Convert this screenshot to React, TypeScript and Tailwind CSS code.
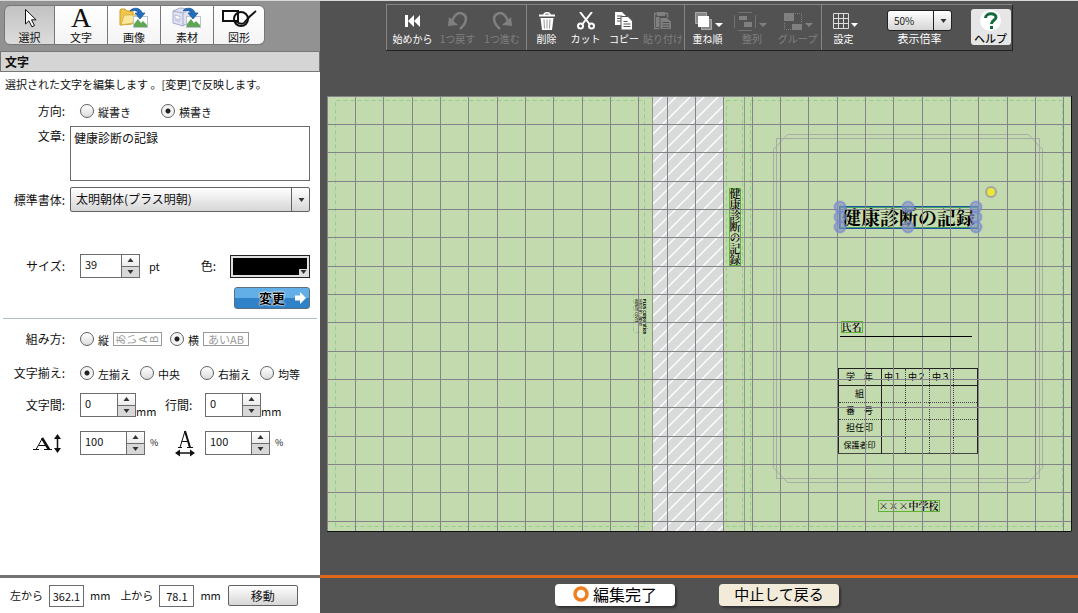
import React, { useId, useState } from "react";

const mincho = "font-['Noto_Serif_CJK_JP','Noto_Sans_CJK_JP',serif]";

/* ---------- shared controls ---------- */

function Caret({ up = false }: { up?: boolean }) {
  return (
    <svg width="7" height="4" viewBox="0 0 7 4" aria-hidden="true">
      <path d={up ? "M3.5 0 L6.5 4 H0.5 Z" : "M0.5 0 H6.5 L3.5 4 Z"} fill="#333" />
    </svg>
  );
}

function FieldLabel({ htmlFor, children }: { htmlFor?: string; children: React.ReactNode }) {
  return (
    <label htmlFor={htmlFor} className="shrink-0 text-right whitespace-nowrap">
      {children}
    </label>
  );
}

function Radio({ name, label, checked, onSelect, extra }: {
  name: string; label: string; checked: boolean; onSelect: () => void; extra?: React.ReactNode;
}) {
  return (
    <label className="flex items-center gap-1 text-[11px] whitespace-nowrap">
      <input
        type="radio"
        name={name}
        checked={checked}
        onChange={onSelect}
        className="size-[14px] shrink-0 appearance-none rounded-full border border-[#5f6163] bg-linear-to-b from-white to-[#dcdcdc] checked:bg-[radial-gradient(circle,#222_2px,#f4f4f4_3px)]"
      />
      <span className="pt-[2px]">{label}</span>
      {extra}
    </label>
  );
}

const spinnerWidths = { sm: "w-14", md: "w-[60px]", lg: "w-[65px]" };

function Spinner({ id, label, initial, size = "sm" }: { id: string; label?: string; initial: number; size?: "sm" | "md" | "lg" }) {
  const [value, setValue] = useState(initial);
  return (
    <div className={`flex h-6 shrink-0 ${spinnerWidths[size]}`}>
      <input
        id={id}
        aria-label={label}
        value={value}
        onChange={(e) => setValue(Number(e.target.value) || 0)}
        className="min-w-0 flex-1 border border-[#6a6c6e] bg-white pb-1 pl-1 text-[11px] leading-4"
      />
      <div className="flex w-[18px] flex-col border-y border-r border-[#6a6c6e]">
        <button type="button" aria-label="増やす" onClick={() => setValue(value + 1)} className="flex flex-1 items-center justify-center border-b border-[#6a6c6e] bg-linear-to-b from-white to-[#ececec]">
          <Caret up />
        </button>
        <button type="button" aria-label="減らす" onClick={() => setValue(value - 1)} className="flex flex-1 items-center justify-center bg-[#d8d8d8]">
          <Caret />
        </button>
      </div>
    </div>
  );
}

/* ---------- left panel ---------- */

function Picture() {
  return (
    <>
      <rect x="14.5" y="9.5" width="14" height="11" fill="#fff" stroke="#b9c4cc" />
      <path d="M15 20 v-3 l4 -5 3 4 2 -2 4 4 v2 Z" fill="#5fa653" />
      <path d="M11 4 C13 0 22 0 23 6 h3 l-5 6 -5 -6 h3 C18 3 14 3 11 4 Z" fill="#1f6fc0" stroke="#174f93" strokeWidth=".7" />
    </>
  );
}

const tools = [
  {
    label: "選択",
    icon: (
      <svg width="28" height="23" viewBox="0 0 28 23">
        <path d="M9.5 2.5 V17 l3.4 -3.2 3 6 2.6 -1.2 -3 -5.8 h4.6 Z" fill="#fff" stroke="#111" />
      </svg>
    ),
  },
  {
    label: "文字",
    icon: <span className="font-['Liberation_Serif',serif] text-[28px] leading-6">A</span>,
  },
  {
    label: "画像",
    icon: (
      <svg width="30" height="23" viewBox="0 0 30 23">
        <path d="M1 18 V3 l1 -1 h4 l2 2 h6 v4 h2 l-3 9 Z" fill="#f0c64f" stroke="#d09a26" />
        <path d="M2 18 L5 8 h12 l-3 8 Z" fill="#fbe79a" stroke="#d8ab3c" strokeWidth=".8" />
        <Picture />
      </svg>
    ),
  },
  {
    label: "素材",
    icon: (
      <svg width="30" height="23" viewBox="0 0 30 23">
        <path d="M1 4 L8 1 l10 1 v13 l-7 4 -10 -3 Z" fill="#dfe2f4" stroke="#a7abc9" />
        <path d="M1 4 l10 2 7 -4 M11 6 v13" fill="none" stroke="#a7abc9" />
        <path d="M3 8 l5 1.500 v3 l-5 -1 Z M3 13 l5 1.500" fill="#fff" stroke="#a7abc9" strokeWidth=".7" />
        <Picture />
      </svg>
    ),
  },
  {
    label: "図形",
    icon: (
      <svg width="36" height="23" viewBox="0 0 36 23" fill="none" stroke="#111" strokeWidth="2">
        <path d="M2 4 H17 V14 H2 Z" />
        <circle cx="20" cy="12" r="7" />
        <path d="M35 4 C31 7 27 11 23 16 C20 18 17 16 14 14" />
      </svg>
    ),
  },
];

function ToolTabs() {
  const [active, setActive] = useState("選択");
  return (
    <div className="flex h-[51px] border-t border-[#d5d9d8] bg-[#929292] px-1 pt-1">
      {tools.map((t) => (
        <button
          key={t.label}
          type="button"
          onClick={() => setActive(t.label)}
          className={`flex h-10 w-[53px] flex-col items-center justify-between border border-l-0 border-[#777] pb-px first:w-[51px] first:rounded-l-md first:border-l last:w-[51px] last:rounded-r-md ${
            active === t.label ? "bg-linear-to-b from-[#c2c2c2] to-[#dcdcdc]" : "bg-linear-to-b from-white to-[#f4f4f4]"
          }`}
        >
          <span className="flex h-6 items-center justify-center">{t.icon}</span>
          <span className="text-[11px] leading-3">{t.label}</span>
        </button>
      ))}
    </div>
  );
}

function ScaleIcon({ horizontal = false }: { horizontal?: boolean }) {
  return horizontal ? (
    <svg width="20" height="28" viewBox="0 0 20 28" fill="none" stroke="#111">
      <path d="M5 18.500 L10 2 L15 18.500 M6.500 12.500 H13 M3 18.500 h4 M12 18.500 h6" />
      <path d="M10 2 L15 18.500" strokeWidth="2" />
      <path d="M2 24 H18" strokeWidth="1.500" />
      <path d="M0 24 l5 -3.500 v7 Z M20 24 l-5 -3.500 v7 Z" fill="#111" stroke="none" />
    </svg>
  ) : (
    <svg width="28" height="19" viewBox="0 0 28 19" fill="none" stroke="#111">
      <path d="M3 15.500 L9.500 4 M5.500 11.500 h8 M0 15.500 h6 M11 15.500 h8" />
      <path d="M9 4 L16 15.500" strokeWidth="2.500" />
      <path d="M24.500 3 v13" strokeWidth="1.500" />
      <path d="M24.500 0 l3.500 5 h-7 Z M24.500 19 l3.500 -5 h-7 Z" fill="#111" stroke="none" />
    </svg>
  );
}

function TextForm() {
  const id = useId();
  const [direction, setDirection] = useState("横書き");
  const [flow, setFlow] = useState("横");
  const [align, setAlign] = useState("左揃え");
  const sample = "flex h-[14px] shrink-0 items-center justify-center border border-[#999] text-[11px] leading-3 text-[#999]";
  return (
    <form className="flex-1 text-xs" onSubmit={(e) => e.preventDefault()}>
      <p className="px-[5px] pt-[3px] pb-px text-[11px] leading-[18px]">選択された文字を編集します 。[変更]で反映します。</p>

      <div className="grid grid-cols-[65px_1fr] items-center gap-x-[5px] gap-y-[6px] pt-2 pr-[10px]">
        <FieldLabel>方向:</FieldLabel>
        <div className="grid h-[18px] grid-cols-[81px_1fr] pl-[10px]">
          {["縦書き", "横書き"].map((d) => (
            <Radio key={d} name="direction" label={d} checked={direction === d} onSelect={() => setDirection(d)} />
          ))}
        </div>
        <div className="self-start pt-[2px] text-right">
          <FieldLabel htmlFor={`${id}-text`}>文章:</FieldLabel>
        </div>
        <textarea
          id={`${id}-text`}
          defaultValue="健康診断の記録"
          className="block h-[55px] w-full resize-none border border-[#6a6c6e] bg-white px-[3px] py-[2px] text-xs leading-[18px]"
        />
        <FieldLabel htmlFor={`${id}-font`}>標準書体:</FieldLabel>
        <div className="relative">
          <select
            id={`${id}-font`}
            className="block h-[25px] w-full appearance-none rounded-[2px] border border-[#5f6163] bg-linear-to-b from-white to-[#d6d6d6] pb-[2px] pl-[5px] text-xs"
          >
            <option>太明朝体(プラス明朝)</option>
          </select>
          <span className="pointer-events-none absolute inset-y-0 right-0 flex w-[19px] items-center justify-center border-l border-[#5f6163]">
            <Caret />
          </span>
        </div>
      </div>

      <div className="mt-[42px] grid grid-cols-[65px_1fr] items-center gap-x-[15px]">
        <FieldLabel htmlFor={`${id}-size`}>サイズ:</FieldLabel>
        <div className="flex items-center pr-[10px]">
          <Spinner id={`${id}-size`} initial={39} size="md" />
          <span className="ml-[9px] text-[11px]">pt</span>
          <label htmlFor={`${id}-color`} className="ml-auto">色:</label>
          <button
            id={`${id}-color`}
            type="button"
            aria-label="色"
            className="ml-[14px] flex h-[23px] w-20 items-end justify-end border border-[#222] bg-black p-0 ring-2 ring-[#e0e0e0] ring-inset"
          >
            <span className="m-px flex h-[7px] w-[9px] items-center justify-center bg-[#ddd]">
              <Caret />
            </span>
          </button>
        </div>
      </div>

      <div className="flex justify-end pt-[9px] pr-[10px]">
        <button
          type="submit"
          className="flex h-[22px] w-[76px] items-center justify-end gap-[10px] rounded-[3px] border border-[#5c6f80] bg-linear-to-b from-[#62aee6] from-50% to-[#2f82c8] to-50% pr-[3px] text-[13px] font-bold text-black"
        >
          <span className="[text-shadow:0_0_2px_#fff,0_0_2px_#fff,0_0_1px_#fff]">変更</span>
          <svg width="11" height="12" viewBox="0 0 11 12" aria-hidden="true">
            <path d="M0 3.500 H5 V0 L11 6 L5 12 V8.500 H0 Z" fill="#fff" />
          </svg>
        </button>
      </div>

      <hr className="mx-[3px] mt-[9px] border-[#b5bfc0]" />

      <div className="grid grid-cols-[65px_1fr] items-center gap-x-[15px] pt-[10px]">
        <FieldLabel>組み方:</FieldLabel>
        <div className="flex h-5 items-center gap-2">
          <Radio name="flow" label="縦" checked={flow === "縦"} onSelect={() => setFlow("縦")} extra={
            <span className={`${sample} w-[49px]`} aria-hidden="true">
              <span className="h-[45px] w-3 shrink-0 -rotate-90 whitespace-nowrap [text-orientation:upright] [writing-mode:vertical-rl]">あいAB</span>
            </span>
          } />
          <Radio name="flow" label="横" checked={flow === "横"} onSelect={() => setFlow("横")} extra={
            <span className={`${sample} w-[46px]`} aria-hidden="true">あいAB</span>
          } />
        </div>
      </div>

      <div className="grid grid-cols-[65px_1fr] items-center gap-x-[15px] pt-[14px]">
        <FieldLabel>文字揃え:</FieldLabel>
        <div className="grid h-5 grid-cols-[60px_60px_60px_1fr]">
          {["左揃え", "中央", "右揃え", "均等"].map((a) => (
            <Radio key={a} name="align" label={a} checked={align === a} onSelect={() => setAlign(a)} />
          ))}
        </div>
      </div>

      <div className="grid grid-cols-[65px_56px_54px_1fr] items-center gap-y-3 pt-[10px]">
        <FieldLabel htmlFor={`${id}-ls`}>文字間:</FieldLabel>
        <div className="col-span-2 flex items-center pl-[15px]">
          <Spinner id={`${id}-ls`} initial={0} />
          <span className="pt-3 text-[11px] leading-3">mm</span>
        </div>
        <div className="-ml-[10px] flex items-center">
          <label htmlFor={`${id}-lh`} className="w-10 shrink-0 whitespace-nowrap">行間:</label>
          <Spinner id={`${id}-lh`} initial={0} />
          <span className="pt-3 text-[11px] leading-3">mm</span>
        </div>
        <div className="flex justify-end pr-1"><ScaleIcon /></div>
        <div className="col-span-2 flex items-center pl-[15px]">
          <Spinner id={`${id}-sy`} label="縦倍率" initial={100} size="lg" />
          <span className="ml-[5px] text-[9px]">%</span>
        </div>
        <div className="flex items-center">
          <ScaleIcon horizontal />
          <span className="ml-[10px] flex items-center">
            <Spinner id={`${id}-sx`} label="横倍率" initial={100} size="lg" />
            <span className="ml-[5px] text-[9px]">%</span>
          </span>
        </div>
      </div>
    </form>
  );
}

function PositionBar() {
  const box = "h-[22px] border border-[#6a6c6e] bg-white text-center text-[11px]";
  return (
    <form className="flex h-[38px] items-center border-t-3 border-[#737373] pl-[10px] text-[11px]" onSubmit={(e) => e.preventDefault()}>
      <label htmlFor="pos-left">左から</label>
      <input id="pos-left" defaultValue="362.1" className={`${box} ml-[6px] w-[35px]`} />
      <span className="ml-[6px]">mm</span>
      <label htmlFor="pos-top" className="ml-[10px]">上から</label>
      <input id="pos-top" defaultValue="78.1" className={`${box} ml-[6px] w-[35px]`} />
      <span className="ml-[6px]">mm</span>
      <button type="submit" className="ml-[7px] h-[21px] w-[70px] rounded-[2px] border border-[#5f6163] bg-linear-to-b from-white to-[#d6d6d6] text-xs leading-4">
        移動
      </button>
    </form>
  );
}

/* ---------- top toolbar ---------- */

const MenuMark = <path d="M25 11 h8 l-4 4 Z" fill="currentColor" />;

const icons: Record<string, React.ReactNode> = {
  始めから: <svg width="16" height="14" viewBox="0 0 16 14" fill="currentColor"><path d="M0 1 h3 v12 h-3 Z M3 7 L9 1 v12 Z M9 7 L15 1 v12 Z" /></svg>,
  "1つ戻す": <svg width="20" height="18" viewBox="0 0 20 18"><path d="M4 9 C6 3 10 0 14 1.500 C20 4 19 11 12 17" fill="none" stroke="currentColor" strokeWidth="2.500" /><path d="M1 5 L0 14 L10 13 Z" fill="currentColor" /></svg>,
  "1つ進む": <svg width="20" height="18" viewBox="0 0 20 18"><path d="M16 9 C14 3 10 0 6 1.500 C0 4 1 11 8 17" fill="none" stroke="currentColor" strokeWidth="2.500" /><path d="M19 5 L20 14 L10 13 Z" fill="currentColor" /></svg>,
  削除: <svg width="16" height="18" viewBox="0 0 16 18" fill="none" stroke="currentColor"><path d="M0 3.500 h16" strokeWidth="2" /><path d="M5 3 C5 0 11 0 11 3" strokeWidth="1.500" /><path d="M1.500 6 h13 l-1.500 12 h-10 Z" fill="currentColor" stroke="none" /><path d="M5 7.500 l.5 9 M8 7.500 v9 M11 7.500 l-.5 9" stroke="#999" /></svg>,
  カット: <svg width="18" height="18" viewBox="0 0 18 18" fill="none" stroke="currentColor" strokeWidth="2"><path d="M3 0 L12.500 12 M15 0 L5.500 12" /><circle cx="3.500" cy="14" r="2.500" /><circle cx="14.500" cy="14" r="2.500" /></svg>,
  コピー: <svg width="18" height="18" viewBox="0 0 18 18"><path d="M0 0 h7 l4 4 v9 h-11 Z" fill="currentColor" /><path d="M2 4 h5 M2 6.500 h7 M2 9 h7" stroke="#555" /><path d="M6 4.500 h7 l4.500 4.500 v9 h-11.500 Z" fill="currentColor" stroke="#555" /><path d="M8.500 9.500 h4 M8.500 12 h7 M8.500 14.500 h7" stroke="#555" /></svg>,
  貼り付け: <svg width="18" height="18" viewBox="0 0 18 18"><path d="M0.500 1.500 h13 v15 h-13 Z" fill="none" stroke="currentColor" strokeWidth="1.500" /><path d="M3 0 h8 v4 h-8 Z M2 5 h8 v10 h-8 Z" fill="currentColor" /><path d="M6 5.500 h7 l4.500 4 v8 h-11.500 Z" fill="currentColor" stroke="#505050" /><path d="M8.500 10.500 h7 M8.500 13 h7 M8.500 15.500 h7" stroke="#505050" /></svg>,
  重ね順: <svg width="36" height="19" viewBox="0 0 36 19"><path d="M5.500 0.500 h11 v11 h-11 Z M11.500 7.500 h10 v10 h-10 Z" fill="#888" stroke="#aaa" /><path d="M8 4 h11 v11 h-11 Z" fill="#fff" />{MenuMark}</svg>,
  整列: <svg width="36" height="19" viewBox="0 0 36 19"><path d="M4 0.500 h14 M4 18.500 h14 M0.500 3 v13 M21.500 3 v13" stroke="currentColor" strokeOpacity=".7" /><path d="M5 4 h8 v4 h-8 Z M10 10 h8 v5 h-8 Z" fill="currentColor" />{MenuMark}</svg>,
  グループ: <svg width="36" height="19" viewBox="0 0 36 19"><path d="M4 1 h10 v8 h-10 Z M12 12 h10 v6 h-10 Z" fill="currentColor" /><path d="M15 1.500 h6.500 v9 M4.500 11 v6.500 h7" fill="none" stroke="currentColor" strokeDasharray="1 1" />{MenuMark}</svg>,
  設定: <svg width="36" height="19" viewBox="0 0 36 19"><path d="M7.500 1.500 h15 v15 h-15 Z M12.500 1 v16 M17.500 1 v16 M7 6.500 h16 M7 11.500 h16" fill="none" stroke="#ddd" /><path d="M25 11 h7 l-3.500 4 Z" fill="#fff" /></svg>,
};

function Command({ name, width, disabled = false }: { name: string; width: string; disabled?: boolean }) {
  return (
    <button type="button" disabled={disabled} className={`flex flex-col items-center justify-between pt-[6px] pb-1 ${width} ${disabled ? "text-[#808080]" : "text-white"}`}>
      <span className="flex h-5 items-center">{icons[name]}</span>
      <span className="text-[10px] leading-[14px] whitespace-nowrap">{name}</span>
    </button>
  );
}

function CommandBar() {
  const group = "flex border-l border-[#858585]";
  return (
    <header className="flex justify-center border-t border-[#d5d9d8] pt-[3px]">
      <div role="toolbar" className="flex h-[47px] border-t border-r border-b border-t-[#858585] border-r-[#222] border-b-[#222]">
        <div className={`${group} pr-px pl-[3px]`}>
          <Command name="始めから" width="w-[46px]" />
          <Command name="1つ戻す" width="w-[44px]" disabled />
          <Command name="1つ進む" width="w-[45px]" disabled />
        </div>
        <div className={`${group} pl-px`}>
          <Command name="削除" width="w-[38px]" />
          <Command name="カット" width="w-[40px]" />
          <Command name="コピー" width="w-[37px]" />
          <Command name="貼り付け" width="w-[41px]" disabled />
        </div>
        <div className={`${group} pl-px`}>
          <Command name="重ね順" width="w-[44px]" />
          <Command name="整列" width="w-[45px]" disabled />
          <Command name="グループ" width="w-[46px]" disabled />
        </div>
        <div className={`${group} pl-px`}>
          <Command name="設定" width="w-[42px]" />
          <div className="flex w-[106px] flex-col items-center pt-[5px] pl-1">
            <span className="relative flex">
              <select id="zoom" className="h-[21px] w-[65px] appearance-none rounded-[3px] border border-[#222] bg-linear-to-b from-white to-[#d6d6d6] pl-[6px] text-[10px] text-[#222]">
                <option>50%</option>
              </select>
              <span className="pointer-events-none absolute inset-y-0 right-0 flex w-[19px] items-center justify-center border-l border-[#222]">
                <Caret />
              </span>
            </span>
            <label htmlFor="zoom" className="text-[11px] leading-[14px] text-white">表示倍率</label>
          </div>
          <button type="button" className="mt-1 mr-px flex h-9 w-10 flex-col items-center justify-between rounded-[3px] bg-[#e6e6e6] pt-px pb-px">
            <span className="flex size-[21px] items-center justify-center rounded-full bg-white">
              <svg width="14" height="18" viewBox="0 0 14 18" fill="none" stroke="#126b3a" strokeWidth="3">
                <path d="M1.500 6 C1.500 0.500 12.500 0.500 12 5.500 C12 8 7.500 8 7.500 12 M7.500 14 v3" />
              </svg>
            </span>
            <span className="text-[11px] leading-3 font-medium">ヘルプ</span>
          </button>
        </div>
      </div>
    </header>
  );
}

/* ---------- cover artwork ---------- */

const STEP = 28.346;
const columns = Array.from({ length: 27 }, (_, i) => Math.floor(i * STEP) + 0.5);
const rows = Array.from({ length: 16 }, (_, i) => Math.floor(i * STEP) + 0.5);

function Guides() {
  return (
    <svg className="absolute inset-0" width="745" height="436" viewBox="0 0 745 436" fill="none" aria-hidden="true">
      <defs>
        <pattern id="hatch" width="14" height="14" patternUnits="userSpaceOnUse">
          <path d="M-2 16 L16 -2 M-2 2 L2 -2 M12 16 L16 12" stroke="#fff" strokeWidth="1.300" />
        </pattern>
      </defs>
      <rect x="326" y="0" width="70" height="435" fill="#d9dada" />
      <rect x="326" y="0" width="70" height="435" fill="url(#hatch)" />
      <path d="M325.500 0 V435 M417.500 0 V435" stroke="#8d9a88" />
      <g stroke="#91cf8c" strokeDasharray="4 3">
        <path d="M8.500 430.500 V4.500 H317.500 V198.500 H306.500 V236.500 H317.500 V430.500 Z" />
        <path d="M399.500 4.500 H415.500 V430.500 H399.500 Z" />
        <path d="M423.500 4.500 H735.500 V430.500 H423.500 Z" />
      </g>
      <g stroke="#a5ada4">
        <path d="M460.500 38.500 H701.500 L715.500 53.500 V371.500 L701.500 386.500 H460.500 L446.500 371.500 V53.500 Z" />
        <rect x="449.500" y="42.500" width="263" height="340" />
      </g>
    </svg>
  );
}

function GridLines() {
  return (
    <svg className="absolute inset-0" width="745" height="436" viewBox="0 0 745 436" aria-hidden="true">
      <path d={columns.map((x) => `M${x} 0 V435`).join(" ")} stroke="#85838a" />
      <path d={rows.map((y) => `M0 ${y} H744`).join(" ")} stroke="#85838a" />
      <path d="M744.500 0 V435.500 H0" fill="none" stroke="#111" />
      <path d="M513 240.500 H645" stroke="#000" />
    </svg>
  );
}

function RecordTable() {
  const dotted = "border-l border-dotted border-[#444]";
  return (
    <table className="absolute top-[272px] left-[511px] w-[140px] table-fixed border-collapse border border-[#222] text-center text-[9px] leading-4">
      <colgroup>
        <col className="w-[43px]" />
        <col span={4} />
      </colgroup>
      <thead>
        <tr className="h-[17px] border-b border-[#222]">
          <th scope="col" className="p-0 font-normal">学　年</th>
          <th scope="col" className="border-l border-[#222] p-0 font-normal whitespace-nowrap">中１</th>
          <th scope="col" className={`${dotted} p-0 font-normal whitespace-nowrap`}>中２</th>
          <th scope="col" className={`${dotted} p-0 font-normal whitespace-nowrap`}>中３</th>
          <th className={`${dotted} p-0`} />
        </tr>
      </thead>
      <tbody>
        {["組", "番　号", "担任印", "保護者印"].map((r) => (
          <tr key={r} className="h-[17px] border-b border-dotted border-[#444] last:border-solid">
            <th scope="row" className={`p-0 font-normal whitespace-nowrap ${r.length > 3 ? "text-[8px]" : ""}`}>{r}</th>
            <td className="border-l border-[#222]" />
            <td className={dotted} />
            <td className={dotted} />
            <td className={dotted} />
          </tr>
        ))}
      </tbody>
    </table>
  );
}

function Handles() {
  const points = [[7, 7], [75, 7], [143, 7], [7, 17], [143, 17], [7, 27], [75, 27], [143, 27]];
  return (
    <svg className="absolute top-[89px] left-[506px]" width="166" height="50" viewBox="0 0 166 50" aria-hidden="true">
      {points.map(([x, y]) => (
        <circle key={`${x}-${y}`} cx={x} cy={y + 15} r="5.500" fill="#7f92c4" fillOpacity=".65" stroke="#7a82d6" strokeOpacity=".6" strokeWidth="2" />
      ))}
      <circle cx="158" cy="7" r="5" fill="#e8e73c" stroke="#a9a49a" strokeWidth="2" />
    </svg>
  );
}

function Cover() {
  return (
    <div className="relative h-[436px] w-[745px] shrink-0 bg-[#c3daae] text-black">
      <Guides />
      <div className="absolute top-[203px] left-[308px] text-[4px] leading-[4px] whitespace-nowrap [writing-mode:vertical-rl]">
        <p className="font-bold">PLUS Corporation</p>
        <p>Made in Japan</p>
        <p>Album cover</p>
      </div>
      <p className={`absolute top-[92px] left-[402px] flex h-[78px] w-[12px] items-center justify-center border border-[#5fb233] text-[11px] leading-[11px] font-semibold whitespace-nowrap [writing-mode:vertical-rl] ${mincho}`}>健康診断の記録</p>
      <p className={`absolute top-[110px] left-[512px] flex h-[23px] w-[140px] items-center justify-center border border-[#1f4fa8] text-[19px] font-bold whitespace-nowrap ring-1 ring-[#3fa45a] ring-inset ${mincho}`}>健康診断の記録</p>
      <p className={`absolute top-[225px] left-[514px] flex h-[12px] w-[22px] items-center justify-center border border-[#5fb233] text-[10px] font-semibold whitespace-nowrap ${mincho}`}>氏名</p>
      <RecordTable />
      <p className={`absolute top-[404px] left-[551px] flex h-[12px] w-[62px] items-center justify-center border border-[#5fb233] text-[10px] font-semibold whitespace-nowrap ${mincho}`}>×××中学校</p>
      <GridLines />
      <Handles />
    </div>
  );
}

/* ---------- page ---------- */

export default function App() {
  const done = "flex h-[22px] w-[120px] items-center justify-center gap-1 rounded-[4px] pb-px shadow-[2px_2px_2px_#333]";
  return (
    <div className="flex min-h-screen bg-[#525252] font-['Noto_Sans_CJK_JP',sans-serif] text-[#111]">
      <aside className="flex w-80 shrink-0 flex-col bg-white">
        <ToolTabs />
        <h1 className="flex h-[21px] items-center border border-[#777] bg-[#d5d5d5] pl-1 text-xs font-bold">文字</h1>
        <TextForm />
        <PositionBar />
      </aside>
      <main className="flex min-w-0 flex-1 flex-col">
        <CommandBar />
        <div className="flex flex-1 items-center justify-center pt-px">
          <Cover />
        </div>
        <footer className="flex h-[38px] items-center justify-center gap-11 border-t-3 border-[#e0661a] pr-1 pb-[2px] text-black">
          <button type="button" className={`${done} bg-white text-base`}>
            <svg width="16" height="16" viewBox="0 0 16 16" aria-hidden="true">
              <circle cx="8" cy="8" r="6" fill="none" stroke="#ef7f1f" strokeWidth="3.500" />
            </svg>
            編集完了
          </button>
          <button type="button" className={`${done} bg-[#f2ebd9] text-[15px]`}>中止して戻る</button>
        </footer>
      </main>
    </div>
  );
}
